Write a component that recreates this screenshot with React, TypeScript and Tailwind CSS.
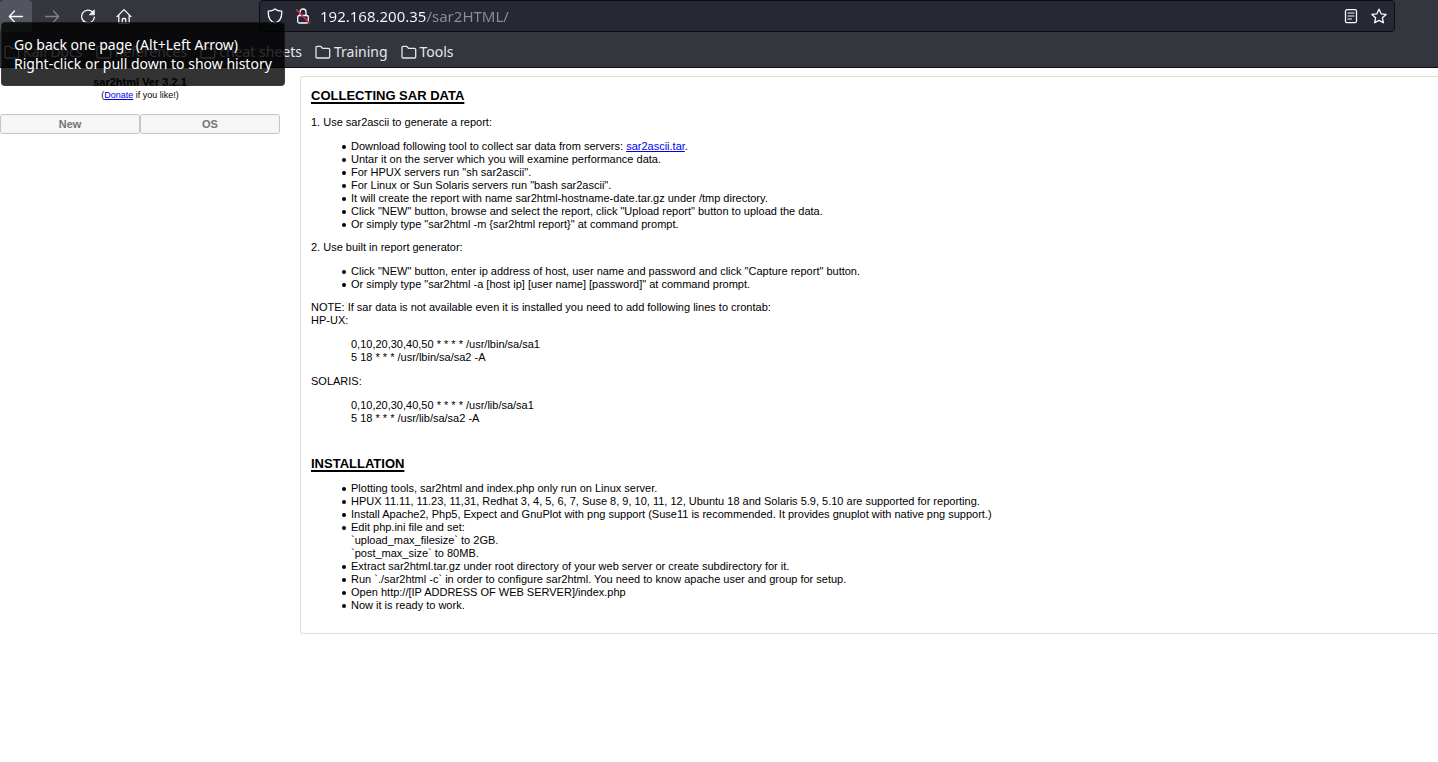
import type { ReactNode } from 'react';

const iconBase = {
  width: 16,
  height: 16,
  viewBox: '0 0 16 16',
  fill: 'none',
  stroke: 'currentColor',
  strokeWidth: 1.3,
  strokeLinecap: 'round' as const,
  strokeLinejoin: 'round' as const,
  'aria-hidden': true,
};

function ArrowIcon({ forward = false }: { forward?: boolean }) {
  return (
    <svg {...iconBase}>
      {forward ? <path d="M1.5 8.5h13M9.5 3l5.2 5.5L9.5 14" /> : <path d="M14.5 8.5h-13M6.5 3L1.3 8.5 6.5 14" />}
    </svg>
  );
}

function ReloadIcon() {
  return (
    <svg {...iconBase}>
      <path d="M12.8 4.2A6.4 6.4 0 1 0 14.4 9.2" />
      <path d="M14.3 2.2v4.6H9.7z" fill="currentColor" strokeWidth={0.8} />
    </svg>
  );
}

function HomeIcon() {
  return (
    <svg {...iconBase}>
      <path d="M1 8.6L8 1.6l7 7M2.8 7.2v7.3q0 1 1 1h8.4q1 0 1-1V7.2" />
      <path d="M6.3 15.5v-4q0-1 1-1h1.4q1 0 1 1v4" />
    </svg>
  );
}

function ShieldIcon() {
  return (
    <svg {...iconBase}>
      <path d="M8 .9C6.4 2.2 3.8 3 1.3 3.2C.9 8.8 2.7 13.3 8 15.2C13.3 13.3 15.1 8.8 14.7 3.2C12.2 3 9.6 2.2 8 .9z" />
    </svg>
  );
}

function InsecureLockIcon() {
  return (
    <svg {...iconBase}>
      <rect x="2.7" y="7.5" width="10.6" height="7.5" rx="1.5" />
      <path d="M5 7.500V4a3 3 0 0 1 6 0v3.5" />
      <path d="M1.500 1.8L14.3 15" stroke="#e22850" strokeWidth={1.5} />
    </svg>
  );
}

function ReaderIcon() {
  return (
    <svg {...iconBase}>
      <rect x="2.5" y="1.7" width="11" height="13" rx="1.5" />
      <path d="M5 5h6M5 8h6M5 11h3.5" strokeWidth={1.2} />
    </svg>
  );
}

function StarIcon() {
  return (
    <svg {...iconBase}>
      <path d="M8 1.2l2.100 4.6 5 .6-3.700 3.4 1 5L8 12.4l-4.400 2.4 1-5L.9 6.4l5-.6z" />
    </svg>
  );
}

function FolderIcon() {
  return (
    <svg {...iconBase}>
      <path d="M1 13V3.5q0-1.200 1.200-1.200h3.300l2 2h6q1.200 0 1.200 1.200V13q0 1-1.200 1H2.200Q1 14 1 13z" />
    </svg>
  );
}

function NavButton({ label, className = '', children }: { label: string; className?: string; children: ReactNode }) {
  return (
    <button type="button" aria-label={label} className={`flex size-8 items-center justify-center rounded ${className}`}>
      {children}
    </button>
  );
}

const bookmarks = ['Kali Docs', 'References', 'cheat sheets', 'Training', 'Tools'];

function BrowserChrome() {
  return (
    <header className="relative border-b border-[#0d0e12] bg-[#34363e] font-['Noto_Sans',sans-serif] text-[#fbfbfe]">
      <div className="flex h-8 items-center">
        <nav aria-label="Navigation" className="flex w-[259px] shrink-0 gap-1">
          <NavButton label="Back" className="bg-[#53555e]">
            <ArrowIcon />
          </NavButton>
          <NavButton label="Forward" className="text-[#7f8188]">
            <ArrowIcon forward />
          </NavButton>
          <NavButton label="Reload">
            <ReloadIcon />
          </NavButton>
          <NavButton label="Home">
            <HomeIcon />
          </NavButton>
        </nav>
        <div className="mr-[43px] flex h-8 min-w-0 flex-1 items-center rounded border border-[#0d0e12] bg-[#262833] px-[7px]">
          <button type="button" aria-label="Tracking protection">
            <ShieldIcon />
          </button>
          <button type="button" aria-label="Connection not secure" className="ml-3">
            <InsecureLockIcon />
          </button>
          <input
            aria-label="Address"
            type="text"
            defaultValue="192.168.200.35/sar2HTML/"
            className="ml-[9px] min-w-0 flex-1 bg-linear-to-r from-[#fbfbfe] from-[107px] to-[#8c8d96] to-[107px] bg-clip-text text-[15px] text-transparent outline-none"
          />
          <button type="button" aria-label="Reader view">
            <ReaderIcon />
          </button>
          <button type="button" aria-label="Bookmark this page" className="ml-3">
            <StarIcon />
          </button>
        </div>
      </div>
      <nav aria-label="Bookmarks" className="flex h-[35px] items-center gap-[13px] pt-1 pl-1">
        {bookmarks.map((name) => (
          <a key={name} href="#" className="flex items-center gap-[3px] text-[14px] leading-5 whitespace-nowrap text-[#e6e6ea]">
            <FolderIcon />
            {name}
          </a>
        ))}
      </nav>
      <div
        role="tooltip"
        className="absolute top-[22px] left-px z-10 rounded border border-white/5 bg-black/80 p-3 text-[14px] leading-[19px] whitespace-nowrap text-white"
      >
        Go back one page (Alt+Left Arrow)
        <br />
        Right-click or pull down to show history
      </div>
    </header>
  );
}

function Sidebar() {
  return (
    <aside className="w-[280px] shrink-0 pt-2 text-center">
      <h1 className="text-[11px] leading-[13px] font-bold">sar2html Ver 3.2.1</h1>
      <p className="text-[9px] leading-[13px]">
        (
        <a href="#" className="text-[#0000ee] underline">
          Donate
        </a>{' '}
        if you like!)
      </p>
      <div className="mt-3 grid grid-cols-2">
        {['New', 'OS'].map((label) => (
          <button
            key={label}
            type="button"
            className="h-5 rounded-[3px] border border-[#c5c5c5] bg-[#f6f6f6] text-[11px] leading-[13px] font-bold text-[#757575]"
          >
            {label}
          </button>
        ))}
      </div>
    </aside>
  );
}

function SectionTitle({ children }: { children: ReactNode }) {
  return <h2 className="text-[13px] leading-[14px] font-bold underline decoration-2 underline-offset-2">{children}</h2>;
}

function Bullets({ items }: { items: ReactNode[] }) {
  return (
    <ul className="mt-[11px] mb-[10px] pl-[31px]">
      {items.map((item, index) => (
        <li
          key={index}
          className="flex gap-[5px] before:mt-[5px] before:size-1 before:shrink-0 before:rounded-full before:bg-black before:content-['']"
        >
          <div className="min-w-0">{item}</div>
        </li>
      ))}
    </ul>
  );
}

function CronLines({ dir }: { dir: string }) {
  return (
    <p className="my-[11px] pl-10">
      0,10,20,30,40,50 * * * * /usr/{dir}/sa/sa1
      <br />5 18 * * * /usr/{dir}/sa/sa2 -A
    </p>
  );
}

function Guide() {
  return (
    <main className="mt-2 ml-5 min-w-0 flex-1 rounded-l-[3px] border border-r-0 border-[#dddddd] px-[10px] pt-3 pb-[11px] text-[11px] leading-[13px]">
      <SectionTitle>COLLECTING SAR DATA</SectionTitle>
      <p className="mt-[13px]">1. Use sar2ascii to generate a report:</p>
      <Bullets
        items={[
          <>
            Download following tool to collect sar data from servers:{' '}
            <a href="#" className="text-[#0000ee] underline">
              sar2ascii.tar
            </a>
            .
          </>,
          'Untar it on the server which you will examine performance data.',
          'For HPUX servers run "sh sar2ascii".',
          'For Linux or Sun Solaris servers run "bash sar2ascii".',
          'It will create the report with name sar2html-hostname-date.tar.gz under /tmp directory.',
          'Click "NEW" button, browse and select the report, click "Upload report" button to upload the data.',
          'Or simply type "sar2html -m {sar2html report}" at command prompt.',
        ]}
      />
      <p>2. Use built in report generator:</p>
      <Bullets
        items={[
          'Click "NEW" button, enter ip address of host, user name and password and click "Capture report" button.',
          'Or simply type "sar2html -a [host ip] [user name] [password]" at command prompt.',
        ]}
      />
      <p>
        NOTE: If sar data is not available even it is installed you need to add following lines to crontab:
        <br />
        HP-UX:
      </p>
      <CronLines dir="lbin" />
      <p>SOLARIS:</p>
      <CronLines dir="lib" />
      <div className="mt-8">
        <SectionTitle>INSTALLATION</SectionTitle>
      </div>
      <Bullets
        items={[
          'Plotting tools, sar2html and index.php only run on Linux server.',
          'HPUX 11.11, 11.23, 11,31, Redhat 3, 4, 5, 6, 7, Suse 8, 9, 10, 11, 12, Ubuntu 18 and Solaris 5.9, 5.10 are supported for reporting.',
          'Install Apache2, Php5, Expect and GnuPlot with png support (Suse11 is recommended. It provides gnuplot with native png support.)',
          <>
            Edit php.ini file and set:
            <br />
            `upload_max_filesize` to 2GB.
            <br />
            `post_max_size` to 80MB.
          </>,
          'Extract sar2html.tar.gz under root directory of your web server or create subdirectory for it.',
          'Run `./sar2html -c` in order to configure sar2html. You need to know apache user and group for setup.',
          'Open http://[IP ADDRESS OF WEB SERVER]/index.php',
          'Now it is ready to work.',
        ]}
      />
    </main>
  );
}

export default function App() {
  return (
    <div className="min-h-screen bg-white font-['Liberation_Sans',Arial,sans-serif] text-black">
      <BrowserChrome />
      <div className="flex items-start">
        <Sidebar />
        <Guide />
      </div>
    </div>
  );
}
